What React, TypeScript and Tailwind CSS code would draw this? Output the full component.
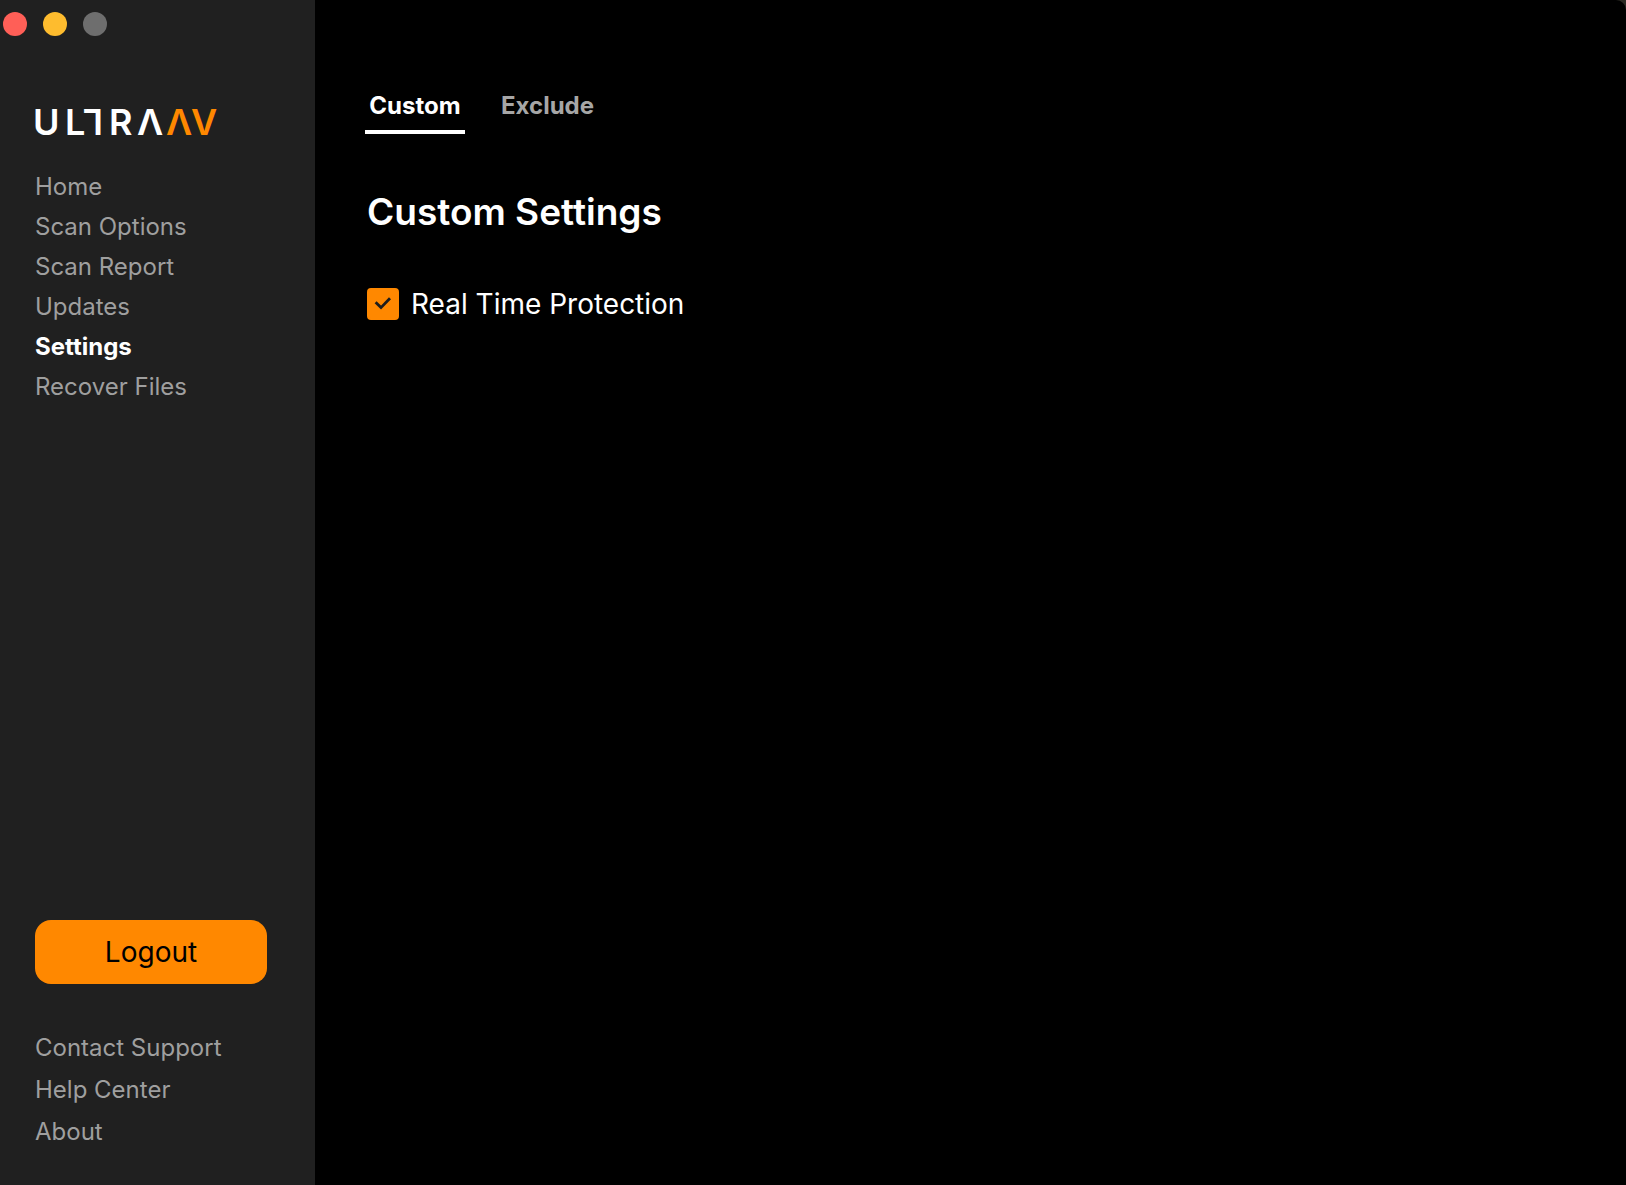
import { useState } from 'react'
import clsx from 'clsx'

const navItems = ['Home', 'Scan Options', 'Scan Report', 'Updates', 'Settings', 'Recover Files']
const helpItems = ['Contact Support', 'Help Center', 'About']
const tabs = ['Custom', 'Exclude']

function WindowButtons() {
  return (
    <div className="flex gap-4 pl-[3px] pt-3">
      <button aria-label="Close" className="size-6 rounded-full bg-[#ff5f57]" />
      <button aria-label="Minimize" className="size-6 rounded-full bg-[#febc2e]" />
      <button aria-label="Zoom" className="size-6 rounded-full bg-[#6e6e6e]" />
    </div>
  )
}

function Logo() {
  return (
    <svg
      role="img"
      aria-label="UltraAV"
      viewBox="-4 -10 192 48"
      className="-ml-1 h-12 w-48 overflow-visible font-['Inter',sans-serif] text-4xl font-semibold"
    >
      <g fill="#ffffff">
        <text x="-2" y="27">U</text>
        <text x="30" y="27">L</text>
        {/* the T is an upside-down L */}
        <text x="-68" y="-1" transform="rotate(180)">L</text>
        <text x="74" y="27">R</text>
        <text x="102" y="27">Λ</text>
      </g>
      <g fill="#ff8800">
        <text x="131" y="27">Λ</text>
        <text x="156" y="27">V</text>
      </g>
    </svg>
  )
}

function Sidebar() {
  return (
    <aside className="flex w-[315px] shrink-0 flex-col bg-[#202020]">
      <WindowButtons />
      <div className="flex flex-1 flex-col px-[35px] pb-8 pt-[62px]">
        <Logo />
        <nav className="mt-[21px] flex flex-col">
          {navItems.map((item) => (
            <a
              key={item}
              href="#"
              className={clsx(
                'text-2xl leading-10',
                item === 'Settings' ? 'font-bold text-white' : 'text-[#9f9f9f]'
              )}
            >
              {item}
            </a>
          ))}
        </nav>

        <button className="mt-auto h-16 w-58 rounded-2xl bg-[#ff8800] text-[28px] text-black">
          Logout
        </button>
        <nav className="mt-[43px] flex flex-col">
          {helpItems.map((item) => (
            <a key={item} href="#" className="text-2xl leading-[42px] text-[#9f9f9f]">
              {item}
            </a>
          ))}
        </nav>
      </div>
    </aside>
  )
}

export default function App() {
  const [tab, setTab] = useState('Custom')
  const [realTime, setRealTime] = useState(true)

  return (
    <div className="min-h-screen bg-[#2b2a24] font-['Inter',sans-serif]">
      <div className="flex min-h-screen overflow-hidden rounded-tr-[10px] bg-black">
        <Sidebar />
        <main className="flex-1 px-[50px] pt-[90px]">
          <div role="tablist" className="flex gap-8">
            {tabs.map((name) => (
              <button
                key={name}
                role="tab"
                aria-selected={tab === name}
                onClick={() => setTab(name)}
                className={clsx(
                  'min-w-25 border-b-4 px-1 pb-2 text-2xl font-bold',
                  tab === name ? 'border-white text-white' : 'border-transparent text-[#a6a6a6]'
                )}
              >
                {name}
              </button>
            ))}
          </div>

          <div className="px-0.5">
            <h1 className="mt-[54px] text-[37px] font-semibold leading-12 text-white">{tab} Settings</h1>

            <label className="mt-[52px] flex w-fit items-center gap-3 text-[28px] leading-8 text-white">
              <span className="relative flex size-8">
                <input
                  type="checkbox"
                  checked={realTime}
                  onChange={(e) => setRealTime(e.target.checked)}
                  className="size-8 appearance-none rounded-sm border-2 border-[#ff8800] checked:bg-[#ff8800]"
                />
                {realTime && (
                  <svg
                    viewBox="0 0 32 32"
                    className="pointer-events-none absolute inset-0 size-8"
                    fill="none"
                    stroke="#1c1c1c"
                    strokeWidth="2.8"
                  >
                    <path d="M8.6 14.2 L14 19.6 L23 10.2" />
                  </svg>
                )}
              </span>
              Real Time Protection
            </label>
          </div>
        </main>
      </div>
    </div>
  )
}
